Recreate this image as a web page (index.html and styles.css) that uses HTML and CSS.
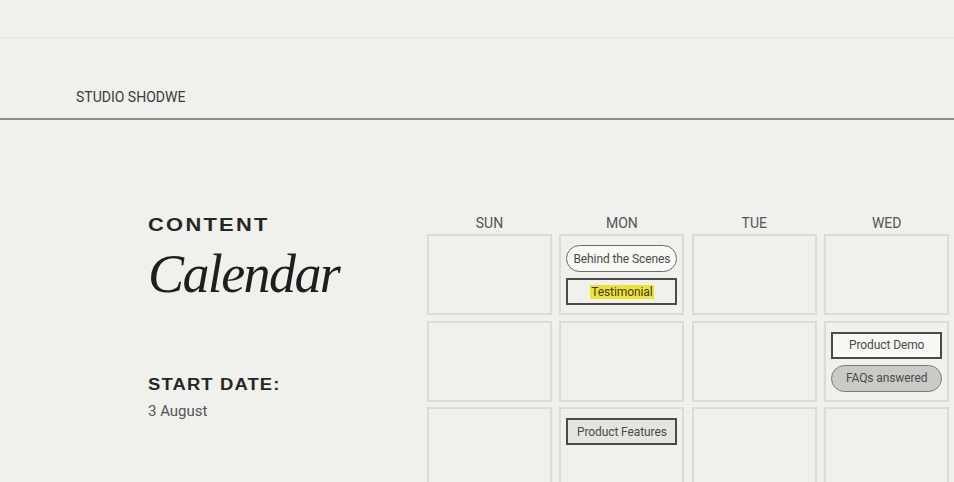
FILE: index.html
```html
<!DOCTYPE html>
<html>
<head>
  <title>Studio Shodwe - Content Calendar</title>
  <link rel="stylesheet" href="styles.css">
</head>
<body>
  <div class="topbar"></div>

  <header class="site-header">
    <span class="brand">STUDIO SHODWE</span>
  </header>

  <main class="page">
    <section class="intro">
      <h2 class="kicker">CONTENT</h2>
      <h1 class="title">Calendar</h1>

      <h3 class="label">START DATE:</h3>
      <p class="date">3 August</p>
    </section>

    <section class="calendar">
      <div class="days">
        <div>SUN</div>
        <div>MON</div>
        <div>TUE</div>
        <div>WED</div>
      </div>

      <div class="grid">
        <!-- week 1 -->
        <div class="cell"></div>
        <div class="cell">
          <span class="tag pill light">Behind the Scenes</span>
          <span class="tag box"><mark>Testimonial</mark></span>
        </div>
        <div class="cell"></div>
        <div class="cell"></div>

        <!-- week 2 -->
        <div class="cell"></div>
        <div class="cell"></div>
        <div class="cell"></div>
        <div class="cell">
          <span class="tag box light">Product Demo</span>
          <span class="tag pill grey">FAQs answered</span>
        </div>

        <!-- week 3 -->
        <div class="cell"></div>
        <div class="cell">
          <span class="tag box beige">Product Features</span>
        </div>
        <div class="cell"></div>
        <div class="cell"></div>
      </div>
    </section>
  </main>
</body>
</html>
```

FILE: styles.css
```css
html, body {
  margin: 0;
  height: 100%;
  overflow: hidden;
}
body {
  font-family: Roboto, "Liberation Sans", sans-serif;
  background-color: #f0f0ec;
  color: #333;
}
.topbar {
  height: 37px;
  border-bottom: 1px solid #e3e3df;
}
.site-header {
  height: 80px;
  padding-left: 76px;
  display: flex;
  align-items: flex-end;
  border-bottom: 2px solid #8c8c88;
}
.brand {
  font-size: 14px;
  line-height: 16px;
  margin-bottom: 13px;
  color: #3a3a3a;
}
.page {
  display: flex;
  padding-top: 93px;
}
.intro {
  width: 279px;
  flex-shrink: 0;
  padding-left: 148px;
  padding-top: 2px;
}
/* wide caps: stretched a little so they read like an extended face */
.kicker, .label {
  margin: 0;
  font-family: "Liberation Sans", Arial, sans-serif;
  font-weight: 700;
  color: #262626;
  transform: scaleX(1.15);
  transform-origin: left center;
}
.kicker {
  font-size: 19px;
  line-height: 19px;
  letter-spacing: 2px;
}
.title {
  margin: 13px 0 0;
  font-family: "Liberation Serif", "Times New Roman", serif;
  font-style: italic;
  font-weight: 400;
  font-size: 54px;
  line-height: 54px;
  letter-spacing: -1.6px;
  color: #1e1e1e;
}
.label {
  margin-top: 76px;
  font-size: 16px;
  line-height: 16px;
  letter-spacing: 1px;
}
.date {
  margin: 9px 0 0;
  font-size: 15px;
  line-height: 18px;
  color: #555;
}
.calendar {
  flex: 1;
  min-width: 0;
}
.days, .grid {
  display: grid;
  grid-template-columns: repeat(4, 125px);
  column-gap: 7.4px;
}
.days {
  margin-bottom: 1px;
}
.days div {
  text-align: center;
  font-size: 14px;
  line-height: 20px;
  color: #555;
}
.grid {
  grid-auto-rows: 81px;
  row-gap: 5.5px;
}
.cell {
  box-sizing: border-box;
  border: 2px solid #dcdcd7;
  padding: 9px 5px 0;
  display: flex;
  flex-direction: column;
  gap: 6px;
}
.tag {
  box-sizing: border-box;
  height: 27px;
  display: flex;
  align-items: center;
  justify-content: center;
  font-size: 12px;
  letter-spacing: -0.1px;
  color: #4a4a4a;
}
.pill {
  border: 1px solid #6a6a6a;
  border-radius: 14px;
}
.box {
  border: 2px solid #4a4a4a;
}
.light {
  background-color: #f8f8f4;
}
.grey {
  background-color: #cacac6;
  border-color: #7a7a78;
}
.beige {
  background-color: #e5e5de;
}
mark {
  background-color: #f1e22c;
  color: #3a3a3a;
  padding: 0 1px;
}
```
